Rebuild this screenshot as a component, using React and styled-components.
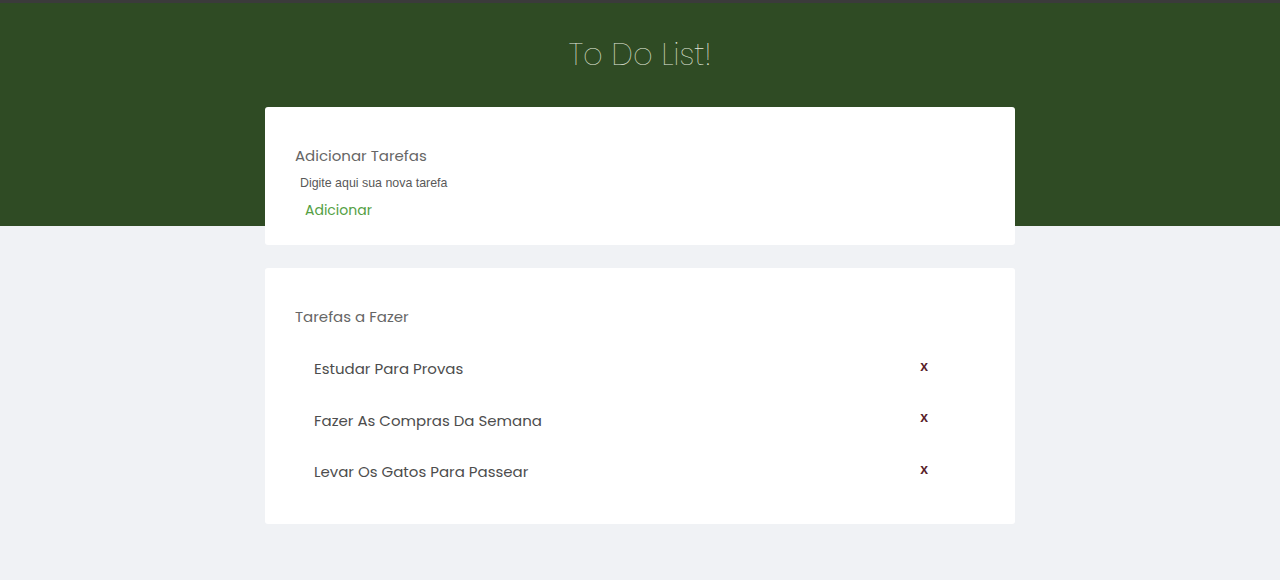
import styled, { createGlobalStyle } from 'styled-components';

const GlobalStyle = createGlobalStyle`
  * {
    box-sizing: border-box;
  }

  body {
    margin: 0;
    font-family: 'Poppins', 'Open Sans', sans-serif;
    background: linear-gradient(#2f4b24 0, #2f4b24 226px, #f0f2f5 226px);
    background-repeat: no-repeat;
    background-color: #f0f2f5;
    min-height: 580px;
  }
`;

const Page = styled.div`
  border-top: 3px solid #3b3b3b;
  display: flex;
  flex-direction: column;
  align-items: center;
`;

const Title = styled.h1`
  margin: 0;
  padding: 31px 0 0;
  height: 104px;
  font-size: 30.5px;
  font-weight: 200;
  line-height: 42px;
  color: #e2e8dc;
`;

const Card = styled.section`
  width: 750px;
  background: #fff;
  border-radius: 3px;
  padding: ${(p) => p.$padding};
  margin-bottom: 23px;
`;

const CardTitle = styled.h2`
  margin: 0;
  font-size: 15px;
  font-weight: 400;
  line-height: 18px;
  color: #666;
`;

const Input = styled.input`
  display: block;
  margin: 8px 0 0 5px;
  padding: 0;
  width: 300px;
  height: 20px;
  border: none;
  outline: none;
  background: transparent;
  font-family: 'Liberation Sans', Arial, sans-serif;
  font-size: 12.4px;

  &::placeholder {
    color: #595959;
  }
`;

const AddButton = styled.button`
  display: block;
  margin: 7px 0 0 10px;
  padding: 0;
  height: 20px;
  border: none;
  background: transparent;
  font-family: inherit;
  font-size: 14px;
  color: #54a044;
  cursor: pointer;
`;

const List = styled.ul`
  list-style: none;
  margin: 17px 0 0;
  padding: 0;
`;

const Item = styled.li`
  height: 51.5px;
  display: flex;
  align-items: center;
  justify-content: space-between;
  padding: 0 57px 0 19px;
  font-size: 15px;
  color: #4d4d4d;
`;

const Remove = styled.button`
  border: none;
  background: transparent;
  padding: 0;
  margin-top: -6px;
  font-family: 'Liberation Sans', Arial, sans-serif;
  font-size: 14px;
  font-weight: 700;
  color: #5a1e2a;
  cursor: pointer;
`;

const tasks = [
  'Estudar Para Provas',
  'Fazer As Compras Da Semana',
  'Levar Os Gatos Para Passear',
];

export default function App() {
  return (
    <>
      <GlobalStyle />
      <Page>
        <Title>To Do List!</Title>
        <Card $padding="40px 30px 25px">
          <CardTitle>Adicionar Tarefas</CardTitle>
          <Input placeholder="Digite aqui sua nova tarefa" />
          <AddButton>Adicionar</AddButton>
        </Card>
        <Card $padding="40px 30px 26.5px">
          <CardTitle>Tarefas a Fazer</CardTitle>
          <List>
            {tasks.map((task) => (
              <Item key={task}>
                {task}
                <Remove>x</Remove>
              </Item>
            ))}
          </List>
        </Card>
      </Page>
    </>
  );
}
